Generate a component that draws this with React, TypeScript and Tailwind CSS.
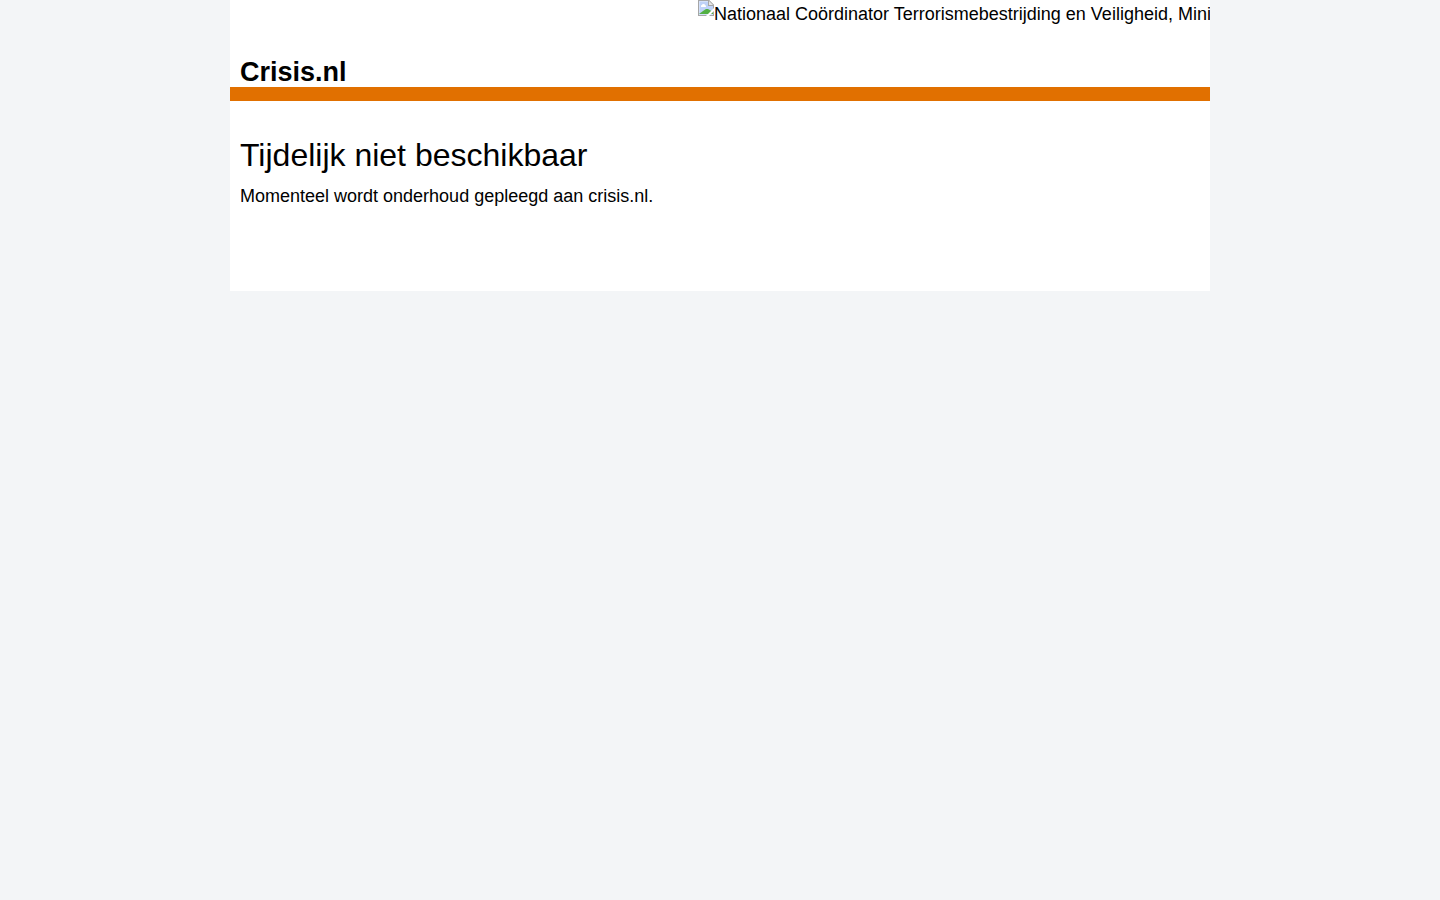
export default function App() {
  return (
    <div className="min-h-screen bg-[#f3f5f7] font-['Liberation_Sans',Arial,sans-serif] text-lg leading-7 text-black">
      <div className="mx-auto max-w-[980px] bg-white pb-[81px]">
        <header>
          <div className="ml-[468px] flex h-[57px] items-start overflow-hidden whitespace-nowrap">
            <svg className="h-4 w-4 shrink-0" viewBox="0 0 16 16" aria-hidden="true">
              <path d="M0 0H11L16 5V16H0Z" fill="#a6a6a6" />
              <path d="M1 1H11L15 5V15H1Z" fill="#d3e0fa" />
              <path d="M2 2H10V6H15V14H2Z" fill="#bfd2f8" />
              <path d="M3 7V6Q3 5 4 5Q4 4 5.500 4Q7 4 7 5Q8 5 8 7Z" fill="#fff" />
              <path d="M1 14L5 11L8 9H10L15 12V14Z" fill="#52b043" />
              <path d="M16 8V11L11 16H8Z" fill="#fff" />
              <path d="M10 0H11L16 5V6H10Z" fill="#a6a6a6" />
              <path d="M11 1V5H15Z" fill="#e6e6e6" />
            </svg>
            <span>Nationaal Coördinator Terrorismebestrijding en Veiligheid, Ministerie van Justitie en Veiligheid</span>
          </div>
          <div className="border-b-14 border-[#e17000] px-2.5">
            <p className="text-[27px] leading-[30px] font-bold">Crisis.nl</p>
          </div>
        </header>
        <main className="px-2.5 pt-9">
          <h1 className="mb-2 text-[32px] leading-[37px]">Tijdelijk niet beschikbaar</h1>
          <p>Momenteel wordt onderhoud gepleegd aan crisis.nl.</p>
        </main>
      </div>
    </div>
  );
}
